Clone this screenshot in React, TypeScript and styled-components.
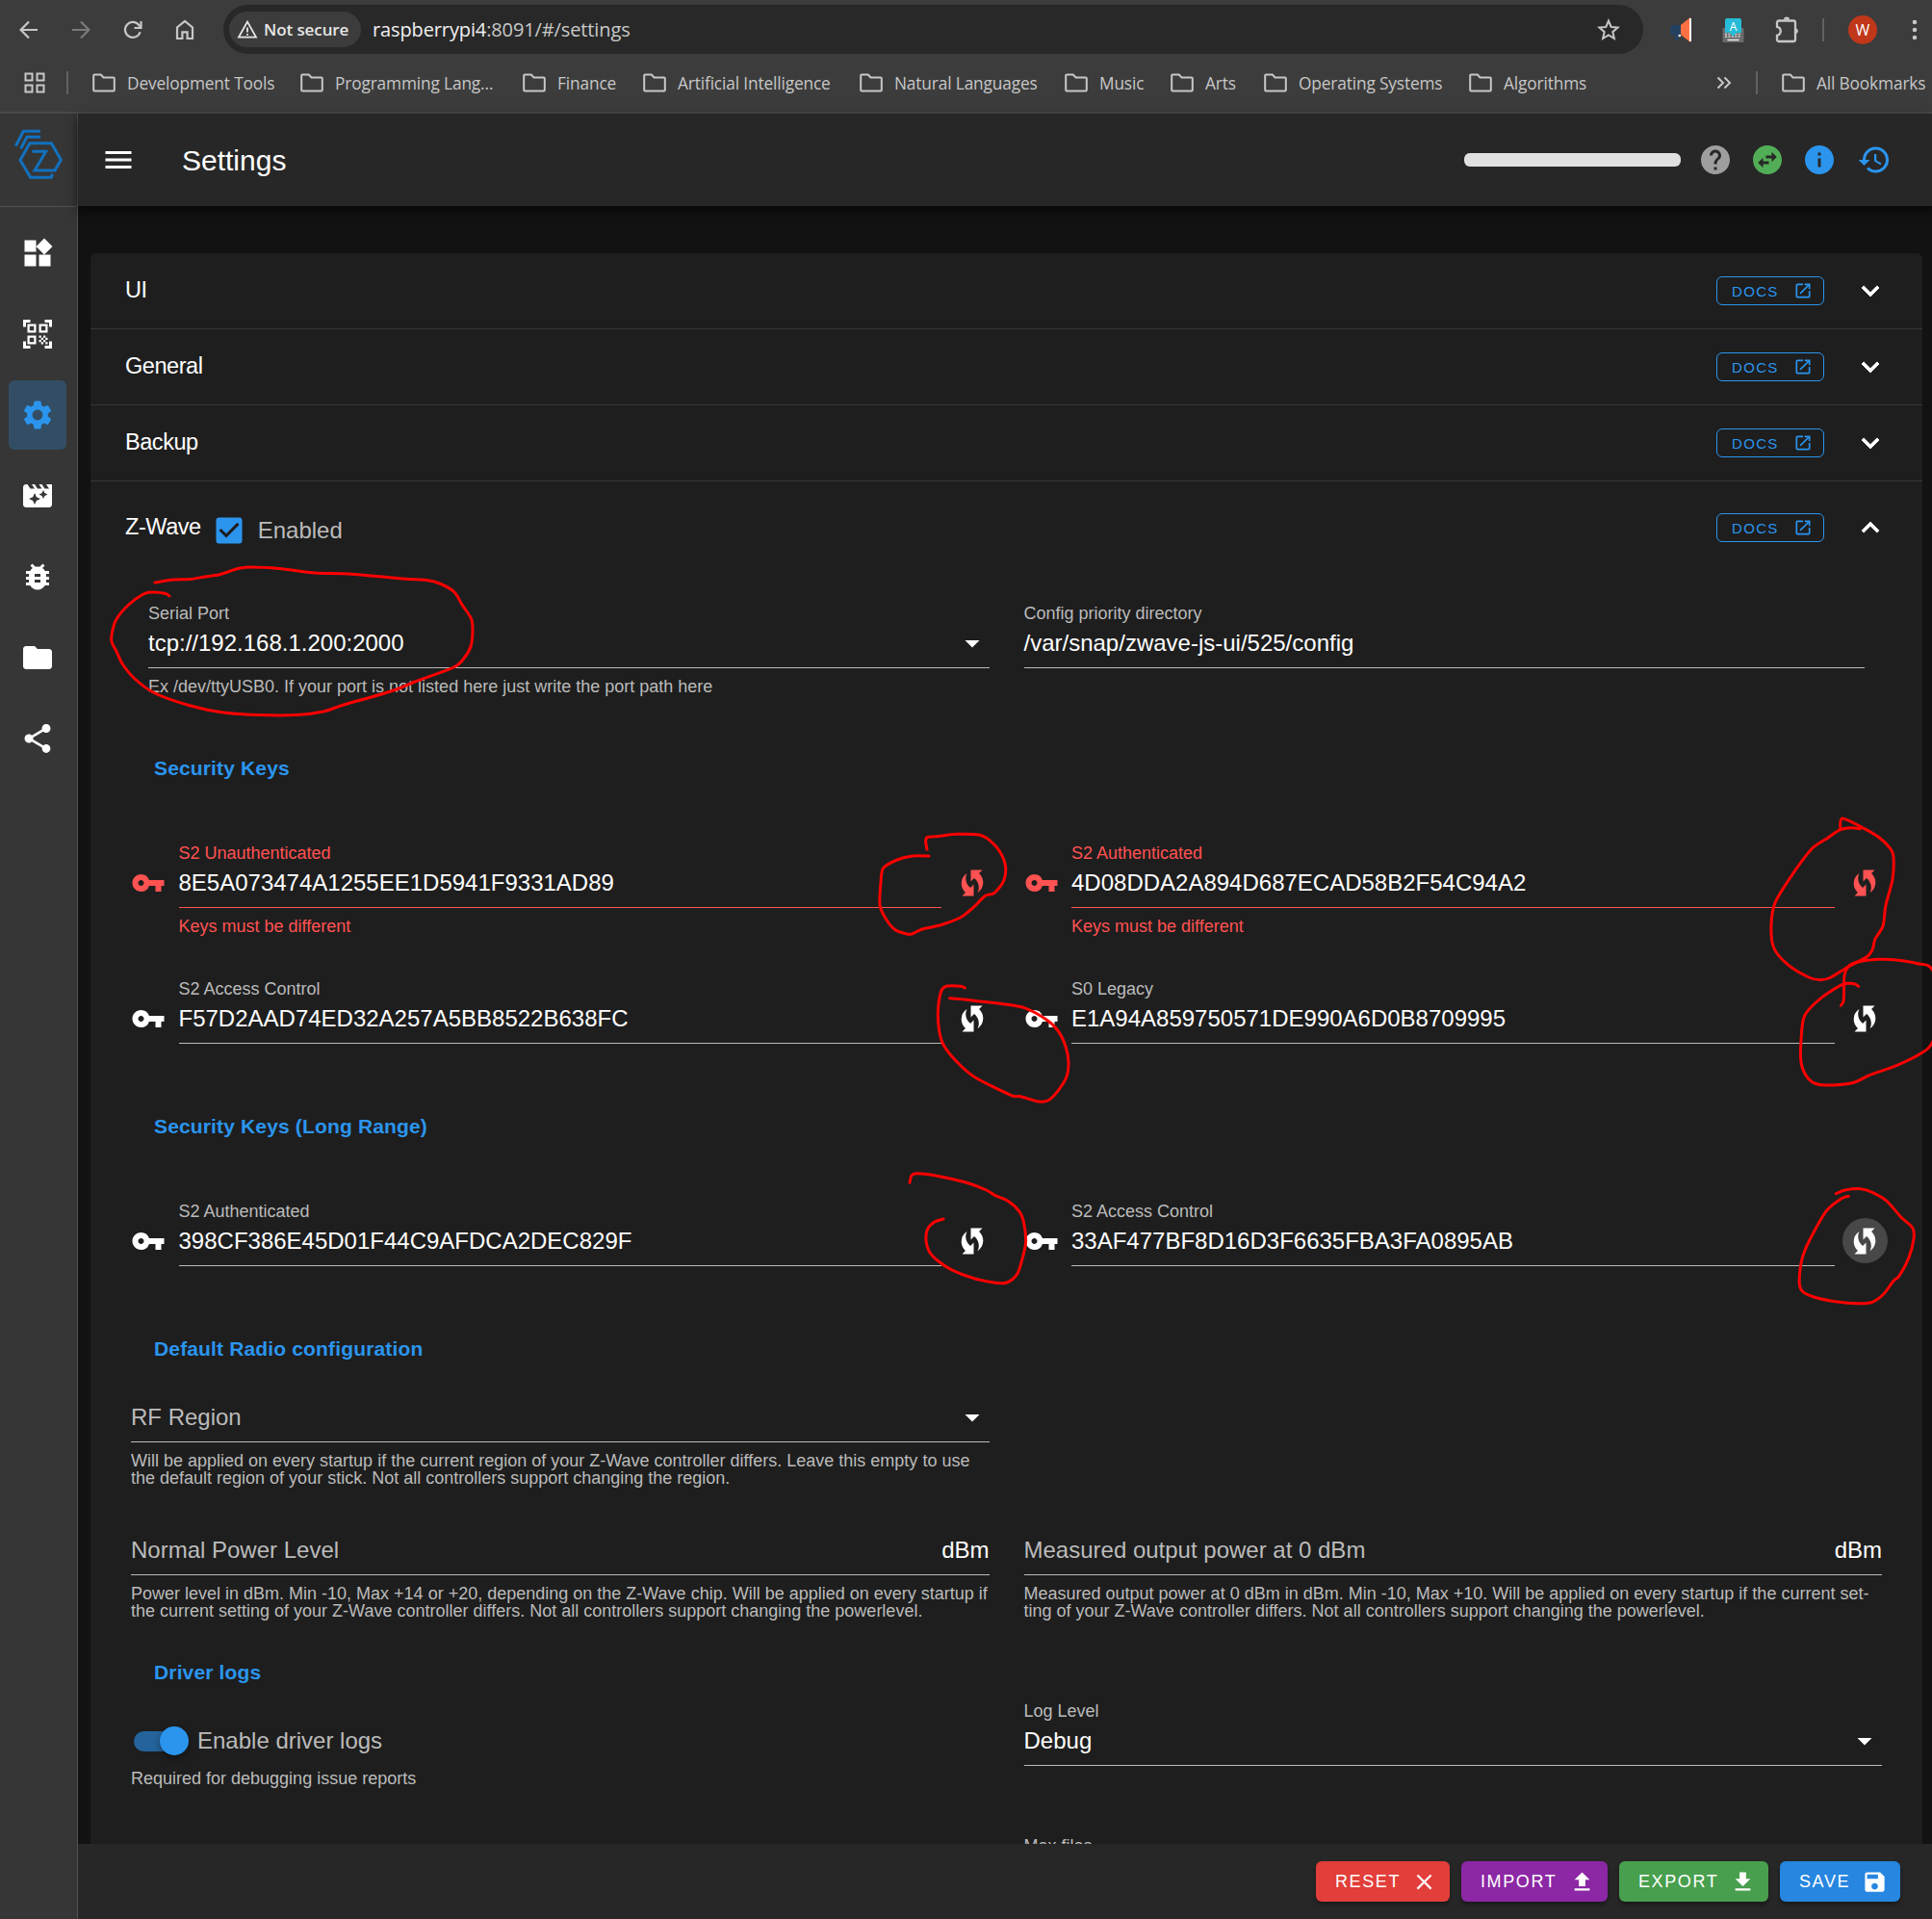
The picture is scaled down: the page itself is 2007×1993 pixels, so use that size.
import React from 'react';
import styled, { createGlobalStyle, css } from 'styled-components';
import {
  MdArrowDropDown,
  MdBugReport,
  MdCheckBox,
  MdClose,
  MdFileDownload,
  MdFileUpload,
  MdFolder,
  MdHelp,
  MdHistory,
  MdInfo,
  MdMenu,
  MdMovieFilter,
  MdOpenInNew,
  MdQrCodeScanner,
  MdSave,
  MdSettings,
  MdShare,
  MdVpnKey,
  MdWidgets,
  MdWifiProtectedSetup,
} from 'react-icons/md';

const color = {
  chrome: '#3c3c3c',
  omnibox: '#282828',
  chromeText: '#c7c7c7',
  bar: '#272727',
  sidebar: '#363636',
  page: '#121212',
  panel: '#1e1e1e',
  divider: '#373737',
  muted: '#bbbbbb',
  primary: '#2b95ee',
  error: '#ff5252',
};

const GlobalStyle = createGlobalStyle`
  * { box-sizing: border-box; }
  body {
    margin: 0;
    background: ${color.page};
    color: #fff;
    font-family: "Liberation Sans", Arial, sans-serif;
    overflow: hidden;
  }
  svg { display: block; flex: none; }
`;

const Window = styled.div`
  position: relative;
  width: 2007px;
  height: 1993px;
  display: flex;
  flex-direction: column;
  overflow: hidden;
`;

/* ---------- browser chrome ---------- */

const Chrome = styled.header`
  height: 118px;
  flex: none;
  background: ${color.chrome};
  border-bottom: 2px solid #494949;
  color: ${color.chromeText};
  font-family: "Open Sans", "Noto Sans", sans-serif;
`;

const NavBar = styled.div`
  height: 62px;
  padding: 0 6px 1px 18px;
  display: flex;
  align-items: center;
`;

const NavIcon = styled.span<{ $dim?: boolean }>`
  width: 54px;
  opacity: ${p => (p.$dim ? 0.45 : 1)};
`;

const Omnibox = styled.div`
  width: 1475px;
  height: 51px;
  margin: 0 28px 0 -2px;
  padding: 0 24px 0 6px;
  display: flex;
  align-items: center;
  border-radius: 26px;
  background: ${color.omnibox};
`;

const SecurityChip = styled.span`
  width: 137px;
  height: 37px;
  padding-left: 8px;
  display: flex;
  align-items: center;
  gap: 6px;
  border-radius: 19px;
  background: ${color.chrome};
  color: #e6e6e6;
  font-size: 17px;
  font-weight: 600;
  letter-spacing: -0.1px;
  white-space: nowrap;
`;

const Url = styled.span`
  flex: 1;
  margin-left: 12px;
  color: #c9c9c9;
  font-size: 20px;
  letter-spacing: -0.12px;
  b { color: #f0f0f0; font-weight: 400; }
`;

const ExtensionIcons = styled.div`
  display: flex;
  align-items: center;
`;

const ExtensionSlot = styled.span<{ $w: number }>`
  width: ${p => p.$w}px;
`;

const Separator = styled.span`
  width: 2px;
  height: 24px;
  flex: none;
  background: #616161;
`;

const Avatar = styled.span`
  width: 30px;
  height: 30px;
  margin: 0 36px 0 25px;
  display: grid;
  place-items: center;
  border-radius: 50%;
  background: #c0371a;
  color: #fff;
  font-size: 16px;
`;

const BookmarkBar = styled.div`
  height: 48px;
  padding-left: 24px;
  display: flex;
  align-items: center;
`;

const Bookmark = styled.span<{ $w: number }>`
  width: ${p => p.$w}px;
  flex: none;
  display: flex;
  align-items: center;
  gap: 12px;
  font-size: 17.3px;
  letter-spacing: -0.14px;
  white-space: nowrap;
`;

const Spacer = styled.span<{ $w: number }>`
  width: ${p => p.$w}px;
  flex: none;
`;

/* ---------- application shell ---------- */

const AppShell = styled.div`
  flex: 1;
  min-height: 0;
  display: flex;
`;

const Sidebar = styled.nav`
  width: 81px;
  flex: none;
  display: flex;
  flex-direction: column;
  background: ${color.sidebar};
  border-right: 1px solid #525252;
`;

const LogoBox = styled.div`
  height: 97px;
  padding: 14px 0 0 12px;
  border-bottom: 1px solid #525252;
`;

const NavList = styled.div`
  padding: 12px 0 0 9px;
  display: flex;
  flex-direction: column;
  gap: 12px;
`;

const NavItem = styled.a<{ $active?: boolean }>`
  width: 60px;
  height: 72px;
  display: grid;
  place-items: center;
  border-radius: 6px;
  ${p =>
    p.$active &&
    css`
      background: #334e64;
      color: ${color.primary};
    `}
`;

const Content = styled.div`
  flex: 1;
  min-width: 0;
  display: flex;
  flex-direction: column;
`;

const AppBar = styled.div`
  position: relative;
  z-index: 1;
  height: 96px;
  flex: none;
  padding: 0 42px 0 24px;
  display: flex;
  align-items: center;
  background: ${color.bar};
  box-shadow: 0 3px 6px rgba(0, 0, 0, 0.4), 0 6px 15px rgba(0, 0, 0, 0.3);
`;

const PageTitle = styled.h1`
  flex: 1;
  margin: 2px 0 0 48px;
  font-size: 30px;
  font-weight: 400;
`;

const Progress = styled.span`
  width: 225px;
  height: 14px;
  margin-right: 18px;
  border-radius: 6px;
  background: #e0e0e0;
`;

const StatusIcon = styled.span<{ $c: string; $w?: number }>`
  width: ${p => p.$w ?? 54}px;
  color: ${p => p.$c};
`;

const Main = styled.main`
  flex: 1;
  min-height: 0;
  padding: 49px 10px 0 13px;
  overflow: hidden;
`;

const Panels = styled.div`
  border-radius: 6px;
  background: ${color.panel};
`;

const PanelHeader = styled.div<{ $open?: boolean }>`
  height: ${p => (p.$open ? 96 : 79)}px;
  padding: 0 36px;
  display: flex;
  align-items: center;
  border-bottom: ${p => (p.$open ? 'none' : `1px solid ${color.divider}`)};
`;

const PanelTitle = styled.span`
  font-size: 23.5px;
  line-height: 26px;
  letter-spacing: -0.45px;
  padding-bottom: 3px;
`;

const Enabled = styled.label`
  margin: 5px 0 0 11px;
  display: flex;
  align-items: center;
  gap: 12px;
  color: ${color.muted};
  font-size: 24px;
  svg { color: ${color.primary}; }
`;

const DocsButton = styled.a`
  width: 112px;
  height: 30px;
  margin: 0 30px 0 auto;
  padding: 0 11px 0 15px;
  display: flex;
  align-items: center;
  justify-content: space-between;
  border: 1px solid ${color.primary};
  border-radius: 6px;
  color: ${color.primary};
  font-size: 15px;
  letter-spacing: 1.34px;
`;

const PanelBody = styled.div`
  padding: 29px 42px 0;
  display: flex;
  flex-direction: column;
`;

const Row = styled.div<{ $h: number; $mt?: number; $inset?: boolean }>`
  height: ${p => p.$h}px;
  margin-top: ${p => p.$mt ?? 0}px;
  padding: ${p => (p.$inset ? '0 18px' : '0')};
  flex: none;
  display: grid;
  grid-template-columns: ${p => (p.$inset ? '873.5px 873.5px' : '891.5px 891.5px')};
  column-gap: 36px;
`;

const SectionTitle = styled.h2<{ $mt: number }>`
  height: 24px;
  margin: ${p => p.$mt}px 0 0 24px;
  flex: none;
  color: ${color.primary};
  font-size: 21px;
  line-height: 24px;
  letter-spacing: 0.15px;
`;

/* ---------- form fields ---------- */

const FieldBox = styled.div`
  flex: 1;
  min-width: 0;
`;

const Control = styled.div<{ $error?: boolean }>`
  height: 69px;
  border-bottom: 1px solid ${p => (p.$error ? color.error : color.muted)};
`;

const FieldLabel = styled.div<{ $error?: boolean }>`
  height: 24px;
  color: ${p => (p.$error ? color.error : color.muted)};
  font-size: 18px;
  line-height: 24px;
`;

const FieldValue = styled.div<{ $placeholder?: boolean }>`
  height: 36px;
  margin-top: 1px;
  display: flex;
  align-items: center;
  justify-content: space-between;
  color: ${p => (p.$placeholder ? color.muted : '#fff')};
  font-size: 24px;
  line-height: 36px;
  white-space: nowrap;
`;

const Suffix = styled.span`
  color: #fff;
`;

const Caret = styled(MdArrowDropDown)`
  color: #fff;
`;

const Hint = styled.div<{ $error?: boolean }>`
  margin-top: 10px;
  color: ${p => (p.$error ? color.error : color.muted)};
  font-size: 18px;
  line-height: 18px;
  white-space: pre;
`;

const KeyRow = styled.div<{ $error?: boolean }>`
  display: flex;
  color: ${p => (p.$error ? color.error : '#fff')};
`;

const KeyIcon = styled.span`
  width: 49.5px;
  flex: none;
  padding-top: 25px;
`;

const RefreshButton = styled.span<{ $hover?: boolean }>`
  width: 47px;
  height: 47px;
  margin: 19px -5.5px 0 8px;
  flex: none;
  display: grid;
  place-items: center;
  border-radius: 50%;
  background: ${p => (p.$hover ? '#484848' : 'transparent')};
`;

const SwitchCell = styled.div`
  padding-top: 25px;
`;

const SwitchLine = styled.div`
  height: 38px;
  padding: 0 0 2px 3px;
  display: flex;
  align-items: center;
  gap: 9px;
  color: ${color.muted};
  font-size: 24px;
`;

const SwitchTrack = styled.span`
  width: 42px;
  height: 21px;
  margin-right: 15px;
  display: flex;
  align-items: center;
  border-radius: 11px;
  background: #24639b;
`;

const SwitchThumb = styled.span`
  width: 30px;
  height: 30px;
  flex: none;
  margin-left: 27px;
  border-radius: 50%;
  background: ${color.primary};
  box-shadow: 0 3px 6px rgba(0, 0, 0, 0.4);
`;

/* ---------- footer ---------- */

const Footer = styled.footer`
  height: 78px;
  flex: none;
  padding-right: 33px;
  display: flex;
  align-items: center;
  justify-content: flex-end;
  gap: 12px;
  background: ${color.bar};
`;

const ActionButton = styled.button<{ $bg: string; $w: number }>`
  width: ${p => p.$w}px;
  height: 42px;
  padding: 0 13px 0 20px;
  display: flex;
  align-items: center;
  justify-content: space-between;
  border: 0;
  border-radius: 6px;
  background: ${p => p.$bg};
  box-shadow: 0 3px 4px rgba(0, 0, 0, 0.35);
  color: #fff;
  font: 18px "Liberation Sans", Arial, sans-serif;
  letter-spacing: 1.6px;
`;

const InkLayer = styled.svg`
  position: absolute;
  inset: 0;
  z-index: 2;
  pointer-events: none;
`;

/* ---------- drawings ---------- */

const BackArrow = () => (
  <svg width="24" height="24" viewBox="0 0 24 24" fill="none" stroke="currentColor" strokeWidth="2.2">
    <path d="M21 12H4M12 3.5 3.6 12l8.4 8.5" />
  </svg>
);

const ForwardArrow = () => (
  <svg width="24" height="24" viewBox="0 0 24 24" fill="none" stroke="currentColor" strokeWidth="2.2">
    <path d="M3 12h17M12 3.5l8.4 8.5-8.4 8.5" />
  </svg>
);

const Reload = () => (
  <svg width="24" height="24" viewBox="0 0 24 24" fill="none" stroke="currentColor" strokeWidth="2.2">
    <path d="M19.6 14.2A8 8 0 1 1 18.6 7.4L20 9.6" />
    <path d="M20.5 3v7h-7" />
  </svg>
);

const Home = () => (
  <svg width="24" height="24" viewBox="0 0 24 24" fill="none" stroke="currentColor" strokeWidth="2.2">
    <path d="M4 21V9.5l8-6.6 8 6.6V21h-5.4v-6.6H9.4V21z" />
  </svg>
);

const Warning = () => (
  <svg width="22" height="22" viewBox="0 0 22 22" fill="none" stroke="currentColor" strokeWidth="1.8">
    <path d="M11 2.6 20 18.6H2z M11 8.5v5M11 15v1.7" />
  </svg>
);

const Star = () => (
  <svg width="24" height="24" viewBox="0 0 24 24" fill="none" stroke="currentColor" strokeWidth="2">
    <path d="M12 2.6l2.7 6.4 6.9.6-5.3 4.6 1.6 6.8-5.9-3.6L6.1 21l1.6-6.8L2.4 9.6l6.9-.6z" />
  </svg>
);

const Megaphone = () => (
  <svg width="24" height="30" viewBox="0 0 24 30">
    <path d="M2 10h9v10.5H9.5L8 26H4.500L5 20.5H2L0 18v-5.500z" fill="#24425f" />
    <path d="M11 10 21 2v26l-10-8z" fill="#ff7043" />
    <path d="M20 3h2v24h-2z" fill="#fff" />
    <circle cx="9.8" cy="21" r="1.3" fill="#fff" />
  </svg>
);

const KeyboardExt = () => (
  <svg width="24" height="28" viewBox="0 0 24 28">
    <rect x="0.5" y="12" width="22" height="15" rx="1" fill="#6b6b6b" />
    <path d="M3 18.5h17M3 21h17" stroke="#ddd" strokeWidth="1.5" strokeDasharray="2 1.4" />
    <path d="M5.500 24.5h12" stroke="#eee" strokeWidth="1.5" />
    <path d="M5 2h13a2 2 0 0 1 2 2v13h-5l-3.500 4L8 17H3V4a2 2 0 0 1 2-2z" fill="#26bcd7" />
    <text x="11.5" y="14.5" textAnchor="middle" fontSize="12" fontFamily="Open Sans, sans-serif" fill="#fff">A</text>
  </svg>
);

const Puzzle = () => (
  <svg width="28" height="30" viewBox="0 0 28 30" fill="none" stroke="currentColor" strokeWidth="2.3">
    <path d="M5 5.500h15a2 2 0 0 1 2 2V25a2 2 0 0 1-2 2H5a2 2 0 0 1-2-2v-4.200c5-1 5-8.100 0-9V7.500a2 2 0 0 1 2-2z" />
    <path d="M10 4.500a3 3 0 0 1 6 0zM23 13.500a3 3 0 0 1 0 5.600z" fill="currentColor" stroke="none" />
  </svg>
);

const Dots = () => (
  <svg width="6" height="24" viewBox="0 0 6 24" fill="currentColor">
    <circle cx="3" cy="4" r="2.3" />
    <circle cx="3" cy="12" r="2.3" />
    <circle cx="3" cy="20" r="2.3" />
  </svg>
);

const AppsGrid = () => (
  <svg width="24" height="24" viewBox="0 0 24 24" fill="none" stroke="currentColor" strokeWidth="2">
    <path d="M2.500 2.500h7v7h-7zM14.500 2.500h7v7h-7zM2.500 14.500h7v7h-7zM14.500 14.500h7v7h-7z" />
  </svg>
);

const FolderOutline = () => (
  <svg width="24" height="20" viewBox="0 0 24 20" fill="none" stroke="currentColor" strokeWidth="2">
    <path d="M1.200 2.500a1 1 0 0 1 1-1h6.600L11.500 4.500h10.300a1 1 0 0 1 1 1v12a1 1 0 0 1-1 1H2.200a1 1 0 0 1-1-1z" />
  </svg>
);

const DoubleChevron = () => (
  <svg width="16" height="14" viewBox="0 0 16 14" fill="none" stroke="currentColor" strokeWidth="2">
    <path d="M1.500 1.500 7 7l-5.500 5.500M8.500 1.500 14 7l-5.500 5.500" />
  </svg>
);

const Chevron = ({ up }: { up?: boolean }) => (
  <svg width="36" height="36" viewBox="0 0 24 24" fill="currentColor" stroke="currentColor" strokeWidth="0.6" strokeLinejoin="round">
    <path d={up ? 'm12 8-6 6 1.410 1.410L12 10.830l4.590 4.580L18 14z' : 'M16.590 8.590 12 13.170 7.410 8.590 6 10l6 6 6-6z'} />
  </svg>
);

const Logo = () => (
  <svg width="56" height="56" viewBox="36 36 168 168" fill="none" stroke="#1271bf" strokeWidth="9">
    <path d="M163 182 160 193H95L63 139 93 86h67l30 52-19 33h-63l35-59h-43" />
    <path d="M126 67H84L65 103M126 49H73L49 95" />
  </svg>
);

const SwapCircle = () => (
  <svg width="36" height="36" viewBox="0 0 24 24" fill="currentColor">
    <path d="M22 12c0-5.520-4.480-10-10-10S2 6.480 2 12s4.480 10 10 10 10-4.480 10-10zm-7-5.500 3.500 3.500-3.500 3.500V11h-4V9h4V6.500zm-6 11L5.500 14 9 10.500V13h4v2H9v2.500z" />
  </svg>
);

/* ---------- hand-drawn marks ---------- */

type Stroke = number[];

const strokes: Stroke[] = [
  [161,605,180,602,198,601.5,213,599,229,596.5,247,590.5,260,589,290,590.5,327,595,363,596,418,601,443,602.5,458,606.5,472,615,480,628,489.5,642.5,491,655,489,671.5,481,685,470.5,693.5,431,708,406,718,357,732,336,739,308,742.5,268,742.5,232,740,198,733,161,720,140,705,127.5,690,121,676.5,116,666.5,116.5,656.5,121,643,133.7,628,149,617,158,615,172,616.5,176,619],
  [965,889,948,889,932,893,917.6,901.7,915,916.7,914,940,919.5,953,929,965,942,970,948,969.7,958,965,977,960.7,998,952.7,1012,941.7,1023,930.7,1033,927.3,1042.6,915,1044.5,900,1039,885,1028,872.7,1017,867,993,866.3,977,868.3,964,869.3,961.6,873.3,963,882.3],
  [1002.4,1026,998,1024.3,983,1024.3,977.5,1030,974.4,1050,975.6,1070,980,1085,993,1101.7,1012,1118.3,1050,1137.3,1060,1138.7,1079,1144,1089,1142.7,1098.7,1133.3,1108,1118.3,1110,1103.3,1107,1086.7,1098.7,1070,1086,1058.3,1064,1046.7,1042,1042.7,1020,1040.3,1002,1038,986.5,1036.7],
  [1932.5,860.7,1923,859.7,1911.8,861.7,1898,870.7,1882,881.7,1863,906.7,1844.4,936.7,1840,960,1842.5,984,1857,1001.7,1879,1015,1891.6,1017.7,1902,1015,1920,1004,1939,994,1945,986.7,1948,975,1956,961.7,1959,940,1966,913.3,1967,890,1964,881.7,1951.4,869.3,1932.5,858.3,1913.6,850,1911.8,861.7],
  [1930.6,1024.3,1926,1021.7,1913.7,1022.7,1891.6,1036.7,1874.6,1055,1871,1080,1871,1103.3,1877,1118.3,1887,1125.7,1904,1127,1926,1124.3,1942,1116.7,1970,1106.7,1995.5,1094,2007,1083.3,2020,1045,2007,1006.7,1992,1000.7,1970,997,1951.4,996.3,1929,999.3,1920,1004,1916,1013.3,1915.5,1030,1915,1040,1912.4,1044.3],
  [980,1266,970.5,1269.3,963.5,1276.7,962,1288.3,965.4,1300,975,1310,989.7,1319.3,1012,1327.7,1034,1332.3,1045.8,1332,1056.6,1323.3,1061.7,1308.3,1065.6,1290,1063.6,1270,1059,1258.3,1047,1247.3,1034,1241.7,1024.7,1236,1005.6,1228.7,983.3,1223.3,961,1219.3,948,1219.7,945,1228.3],
  [1920.3,1242.3,1913,1244.7,1898,1256.7,1886.7,1275,1875,1298.3,1870.7,1313.3,1869.3,1333.3,1873,1341.7,1885,1347.3,1906.7,1351.7,1930,1353.7,1945,1352.3,1956.7,1344,1966.7,1330.7,1973,1325,1982.7,1306.7,1988,1286.7,1986.7,1275,1975,1264.3,1960,1247.3,1945,1238.3,1933,1234.7,1916.7,1236,1907.3,1239.7],
];

/** Smooth path through the sampled pen positions (Catmull-Rom as cubic Béziers). */
const smooth = (flat: Stroke) => {
  const pts: [number, number][] = [];
  for (let i = 0; i < flat.length; i += 2) pts.push([flat[i], flat[i + 1]]);
  let d = `M${pts[0][0]} ${pts[0][1]}`;
  for (let i = 0; i < pts.length - 1; i++) {
    const a = pts[Math.max(0, i - 1)];
    const b = pts[i];
    const c = pts[i + 1];
    const e = pts[Math.min(pts.length - 1, i + 2)];
    d += `C${b[0] + (c[0] - a[0]) / 7} ${b[1] + (c[1] - a[1]) / 7} ${c[0] - (e[0] - b[0]) / 7} ${c[1] - (e[1] - b[1]) / 7} ${c[0]} ${c[1]}`;
  }
  return d;
};

/* ---------- composed parts ---------- */

const Docs = () => (
  <DocsButton>
    DOCS
    <MdOpenInNew size={20} />
  </DocsButton>
);

interface FieldProps {
  label?: string;
  value?: string;
  placeholder?: string;
  hint?: string;
  suffix?: string;
  select?: boolean;
  error?: boolean;
}

const Field = ({ label, value, placeholder, hint, suffix, select, error }: FieldProps) => (
  <FieldBox>
    <Control $error={error}>
      <FieldLabel $error={error}>{label}</FieldLabel>
      <FieldValue $placeholder={!!placeholder}>
        {value ?? placeholder}
        {suffix && <Suffix>{suffix}</Suffix>}
        {select && <Caret size={36} />}
      </FieldValue>
    </Control>
    {hint && <Hint $error={error}>{hint}</Hint>}
  </FieldBox>
);

const KeyField = ({ hover, ...field }: FieldProps & { hover?: boolean }) => (
  <KeyRow $error={field.error}>
    <KeyIcon>
      <MdVpnKey size={36} />
    </KeyIcon>
    <Field {...field} />
    <RefreshButton $hover={hover}>
      <MdWifiProtectedSetup size={36} />
    </RefreshButton>
  </KeyRow>
);

const bookmarks: [string, number][] = [
  ['Development Tools', 216],
  ['Programming Lang...', 231],
  ['Finance', 125],
  ['Artificial Intelligence', 225],
  ['Natural Languages', 213],
  ['Music', 110],
  ['Arts', 97],
  ['Operating Systems', 213],
  ['Algorithms', 257],
];

const navIcons = [MdWidgets, MdQrCodeScanner, MdSettings, MdMovieFilter, MdBugReport, MdFolder, MdShare];

const BrowserChrome = () => (
  <Chrome>
    <NavBar>
      <NavIcon><BackArrow /></NavIcon>
      <NavIcon $dim><ForwardArrow /></NavIcon>
      <NavIcon><Reload /></NavIcon>
      <NavIcon><Home /></NavIcon>
      <Omnibox>
        <SecurityChip><Warning />Not secure</SecurityChip>
        <Url><b>raspberrypi4</b>:8091/#/settings</Url>
        <Star />
      </Omnibox>
      <ExtensionIcons>
        <ExtensionSlot $w={54}><Megaphone /></ExtensionSlot>
        <ExtensionSlot $w={54}><KeyboardExt /></ExtensionSlot>
        <ExtensionSlot $w={50}><Puzzle /></ExtensionSlot>
        <Separator />
        <Avatar>W</Avatar>
        <Dots />
      </ExtensionIcons>
    </NavBar>
    <BookmarkBar>
      <AppsGrid />
      <Spacer $w={21} />
      <Separator />
      <Spacer $w={25} />
      {bookmarks.map(([name, width]) => (
        <Bookmark key={name} $w={width}><FolderOutline />{name}</Bookmark>
      ))}
      <DoubleChevron />
      <Spacer $w={25} />
      <Separator />
      <Spacer $w={25} />
      <Bookmark $w={156}><FolderOutline />All Bookmarks</Bookmark>
    </BookmarkBar>
  </Chrome>
);

const ZWaveSettings = () => (
  <PanelBody>
    <Row $h={97} $inset>
      <Field
        label="Serial Port"
        value="tcp://192.168.1.200:2000"
        hint="Ex /dev/ttyUSB0. If your port is not listed here just write the port path here"
        select
      />
      <Field label="Config priority directory" value="/var/snap/zwave-js-ui/525/config" />
    </Row>

    <SectionTitle $mt={64}>Security Keys</SectionTitle>
    <Row $h={141} $mt={64}>
      <KeyField error label="S2 Unauthenticated" value="8E5A073474A1255EE1D5941F9331AD89" hint="Keys must be different" />
      <KeyField error label="S2 Authenticated" value="4D08DDA2A894D687ECAD58B2F54C94A2" hint="Keys must be different" />
    </Row>
    <Row $h={69}>
      <KeyField label="S2 Access Control" value="F57D2AAD74ED32A257A5BB8522B638FC" />
      <KeyField label="S0 Legacy" value="E1A94A859750571DE990A6D0B8709995" />
    </Row>

    <SectionTitle $mt={74}>Security Keys (Long Range)</SectionTitle>
    <Row $h={69} $mt={64}>
      <KeyField label="S2 Authenticated" value="398CF386E45D01F44C9AFDCA2DEC829F" />
      <KeyField label="S2 Access Control" value="33AF477BF8D16D3F6635FBA3FA0895AB" hover />
    </Row>

    <SectionTitle $mt={74}>Default Radio configuration</SectionTitle>
    <Row $h={115} $mt={16}>
      <Field
        placeholder="RF Region"
        hint={'Will be applied on every startup if the current region of your Z-Wave controller differs. Leave this empty to use\nthe default region of your stick. Not all controllers support changing the region.'}
        select
      />
    </Row>
    <Row $h={115} $mt={23}>
      <Field
        placeholder="Normal Power Level"
        suffix="dBm"
        hint={'Power level in dBm. Min -10, Max +14 or +20, depending on the Z-Wave chip. Will be applied on every startup if\nthe current setting of your Z-Wave controller differs. Not all controllers support changing the powerlevel.'}
      />
      <Field
        placeholder="Measured output power at 0 dBm"
        suffix="dBm"
        hint={'Measured output power at 0 dBm in dBm. Min -10, Max +10. Will be applied on every startup if the current set-\nting of your Z-Wave controller differs. Not all controllers support changing the powerlevel.'}
      />
    </Row>

    <SectionTitle $mt={43}>Driver logs</SectionTitle>
    <Row $h={140} $mt={16}>
      <SwitchCell>
        <SwitchLine>
          <SwitchTrack><SwitchThumb /></SwitchTrack>
          Enable driver logs
        </SwitchLine>
        <Hint>Required for debugging issue reports</Hint>
      </SwitchCell>
      <Field label="Log Level" value="Debug" select />
    </Row>
    <Row $h={69}>
      <span />
      <Field label="Max files" />
    </Row>
  </PanelBody>
);

export default function App() {
  return (
    <Window>
      <GlobalStyle />
      <BrowserChrome />
      <AppShell>
        <Sidebar>
          <LogoBox><Logo /></LogoBox>
          <NavList>
            {navIcons.map((Icon, i) => (
              <NavItem key={i} $active={i === 2}><Icon size={36} /></NavItem>
            ))}
          </NavList>
        </Sidebar>
        <Content>
          <AppBar>
            <MdMenu size={36} />
            <PageTitle>Settings</PageTitle>
            <Progress />
            <StatusIcon $c="#9e9e9e"><MdHelp size={36} /></StatusIcon>
            <StatusIcon $c="#52ae56"><SwapCircle /></StatusIcon>
            <StatusIcon $c={color.primary} $w={57}><MdInfo size={36} /></StatusIcon>
            <StatusIcon $c={color.primary} $w={36}><MdHistory size={36} /></StatusIcon>
          </AppBar>
          <Main>
            <Panels>
              {['UI', 'General', 'Backup'].map(name => (
                <PanelHeader key={name}>
                  <PanelTitle>{name}</PanelTitle>
                  <Docs />
                  <Chevron />
                </PanelHeader>
              ))}
              <PanelHeader $open>
                <PanelTitle>Z-Wave</PanelTitle>
                <Enabled><MdCheckBox size={36} />Enabled</Enabled>
                <Docs />
                <Chevron up />
              </PanelHeader>
              <ZWaveSettings />
            </Panels>
          </Main>
          <Footer>
            <ActionButton $bg="#e23e3a" $w={139}>RESET<MdClose size={27} /></ActionButton>
            <ActionButton $bg="#8c27a5" $w={152}>IMPORT<MdFileUpload size={27} /></ActionButton>
            <ActionButton $bg="#489f4e" $w={155}>EXPORT<MdFileDownload size={27} /></ActionButton>
            <ActionButton $bg="#2686e0" $w={125}>SAVE<MdSave size={27} /></ActionButton>
          </Footer>
        </Content>
      </AppShell>
      <InkLayer width="2007" height="1993" fill="none" stroke="#ff0000" strokeWidth="3" strokeLinecap="round" strokeLinejoin="round">
        {strokes.map((s, i) => <path key={i} d={smooth(s)} />)}
      </InkLayer>
    </Window>
  );
}
